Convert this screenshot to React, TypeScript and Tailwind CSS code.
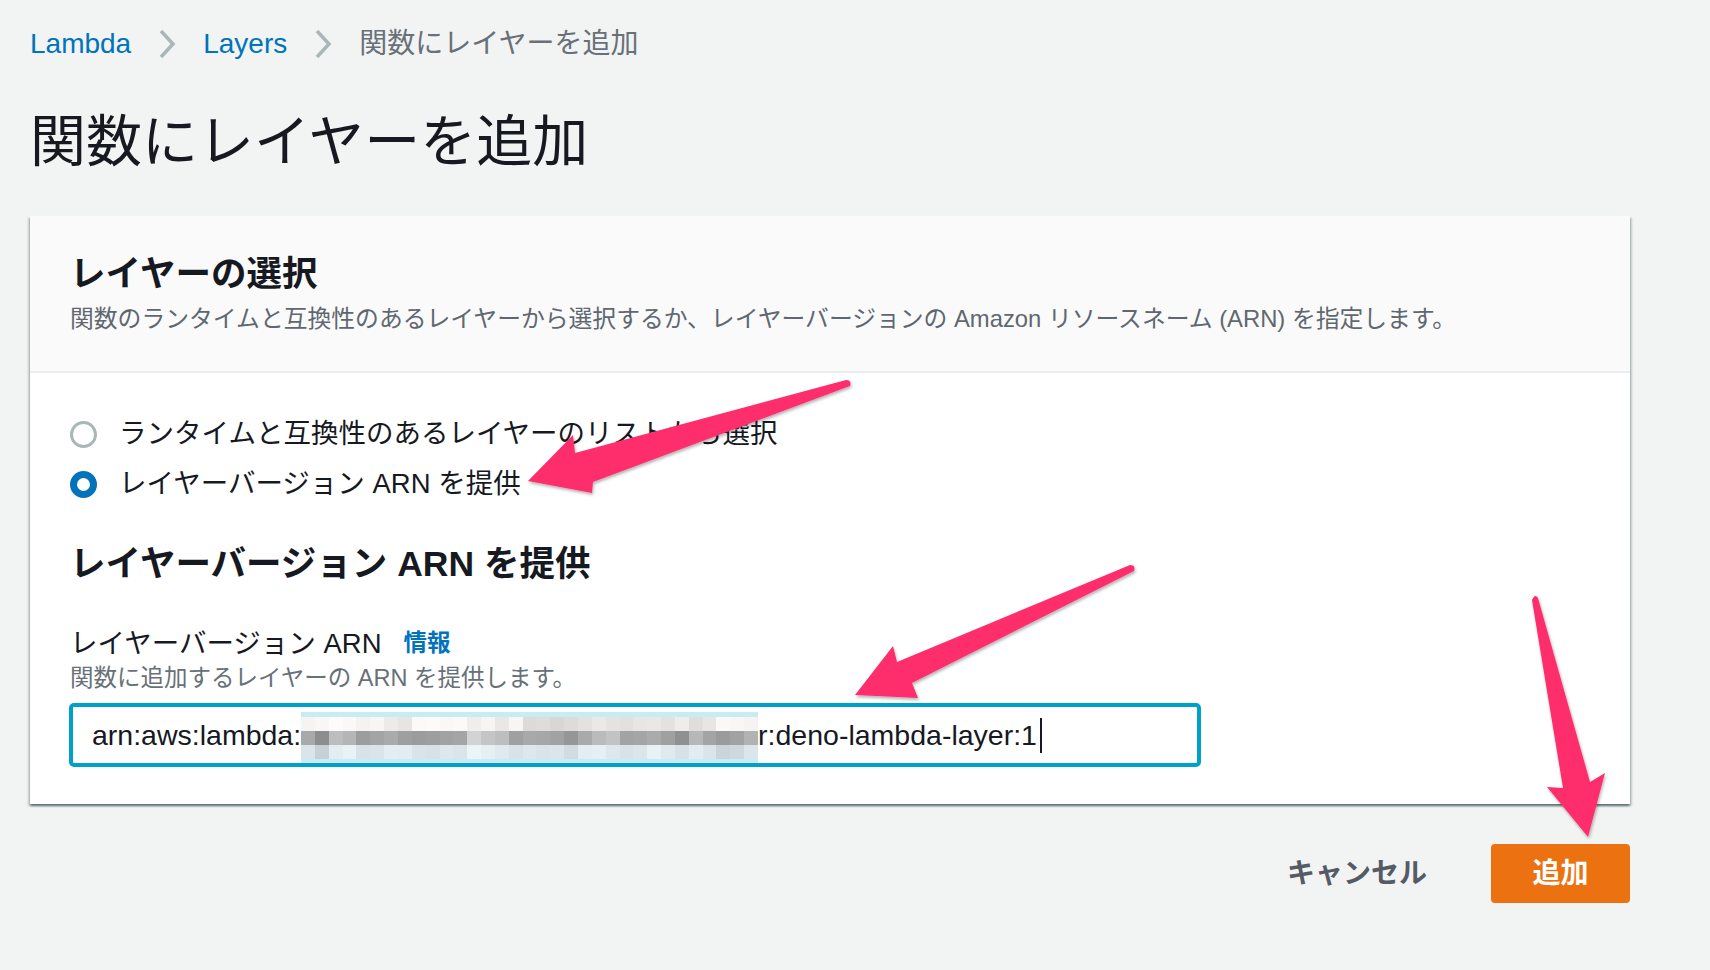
import React from "react";

const row1 = ["#f6f3f3","#fbf6f6","#fdfbfb","#fbf8f8","#f7f2f2","#f9f5f5","#efeaea","#e8e4e4","#fcf9f9","#fdfafa","#fbf7f7","#fcf9f9","#f0eded","#f7f4f4","#ebe7e7","#f8f5f5","#dedada","#e0dcdc","#dad6d6","#dfdbdb","#e5e1e1","#ece8e8","#e6e2e2","#e4e0e0","#e9e5e5","#ebe7e7","#e5e1e1","#f0ecec","#e1dddd","#e9e5e5","#fbf8f8","#f9f6f6","#f6f3f3"];
const row2 = ["#a7a9aa","#8b8d8e","#bcbdbe","#b4b5b6","#9c9d9e","#a3a4a5","#a9aaab","#9e9fa0","#9b9c9d","#9d9e9f","#a1a2a3","#a4a5a6","#d2d3d4","#c4c5c6","#bdbebf","#9fa0a1","#a8a9aa","#a6a7a8","#a1a2a3","#959697","#a9aaab","#babbbc","#c2c3c4","#a2a3a4","#a4a5a6","#aaabac","#9fa0a1","#8f9091","#b6b7b8","#a3a4a5","#9a9b9c","#a1a2a3","#b1b2b3"];
const row3 = ["#d9e5ea","#c5d1d6","#e2eef2","#e8f3f6","#d7e3e8","#d9e5ea","#e3eef2","#e2edf1","#d8e4e8","#d6e2e6","#dce8ec","#d9e5e9","#eaf5f8","#e5f0f3","#dfeaee","#d8e3e7","#dde8ec","#d9e4e8","#dbe6ea","#d0dce0","#e3eef2","#e5f0f4","#dde8ec","#d7e3e7","#dbe6ea","#e8f2f5","#dfeaee","#d6e2e6","#e2edf1","#dae5e9","#c9d5da","#cdd9de","#dbe6ea"];

// pixelated redaction over the account id
const Mosaic = () => (
    <div className="w-[457px] h-[51px] self-end flex flex-col shrink-0">
        <div className="h-[5px] bg-[#c8ebf4]"></div>
        {[row1, row2, row3].map((row, i) => (
            <div key={i} className="flex h-[14px]">
                {row.map((c, j) => <div key={j} className="flex-1" style={{ backgroundColor: c }}></div>)}
            </div>
        ))}
        <div className="h-[4px] bg-[#c8ebf4]"></div>
    </div>
);

const Chevron = () => (
    <svg width="18" height="30" viewBox="0 0 18 30" fill="none">
        <polyline points="3,2 15,15 3,28" stroke="#aab7b8" strokeWidth="3.5" />
    </svg>
);

const Radio = ({ checked, label }: { checked?: boolean; label: string }) => (
    <div className="flex items-center h-[40px]">
        {checked
            ? <span className="w-[27px] h-[27px] rounded-full border-[7px] border-[#0073bb] bg-white shrink-0"></span>
            : <span className="w-[27px] h-[27px] rounded-full border-[3px] border-[#aab7b8] bg-white shrink-0"></span>}
        <span className="ml-[22px] text-[27.5px] text-[#16191f]">{label}</span>
    </div>
);

const Arrows = () => (
    <svg className="absolute left-0 top-0 pointer-events-none" width="1710" height="970" viewBox="0 0 1710 970">
        <defs>
            <filter id="sh" x="-20%" y="-20%" width="140%" height="140%">
                <feDropShadow dx="1" dy="2" stdDeviation="1.5" floodColor="#000" floodOpacity="0.3" />
            </filter>
        </defs>
        <g fill="#fe2f6d" filter="url(#sh)">
            <path d="M528 481 L573 435 L575 453 L846 380 Q852 380 850 386 L593 482 L592 493 Z" />
            <path d="M855 695 L893 646 L897 662 L1130 565 Q1136 565 1134 571 L912 683 L918 698 Z" />
            <path d="M1588 837 L1547 787 L1563 788 L1532 600 Q1535 593 1538 598 L1590 782 L1605 773 Z" />
        </g>
    </svg>
);

const App = () => {
    return (
        <div className="relative min-h-screen w-full bg-[#f2f3f3] font-['Liberation_Sans','Noto_Sans_CJK_JP',sans-serif]">
            <div className="pl-[30px] pr-[80px] pt-[24px] pb-[60px]">
                <div className="flex items-center h-[40px] gap-[27px] text-[28px]">
                    <span className="text-[#0073bb]">Lambda</span>
                    <Chevron />
                    <span className="text-[#0073bb]">Layers</span>
                    <Chevron />
                    <span className="text-[#687078]">関数にレイヤーを追加</span>
                </div>

                <h1 className="mt-[43px] h-[70px] flex items-center text-[56px] text-[#16191f]">関数にレイヤーを追加</h1>

                <div className="mt-[39px] w-[1600px] bg-white shadow-[0_2px_2px_0_rgba(0,28,36,0.45),2px_2px_2px_0_rgba(0,28,36,0.15),-2px_2px_2px_0_rgba(0,28,36,0.15)]">
                    <div className="bg-[#fafafa] border-b-[2px] border-[#eaeded] px-[40px] pt-[37px] pb-[35px]">
                        <h2 className="h-[44px] flex items-center text-[35.5px] font-bold text-[#16191f]">レイヤーの選択</h2>
                        <p className="mt-[5px] h-[34px] flex items-center text-[23.8px] text-[#5f6770]">
                            関数のランタイムと互換性のあるレイヤーから選択するか、レイヤーバージョンの Amazon リソースネーム (ARN) を指定します。
                        </p>
                    </div>

                    <div className="px-[40px] pt-[41px] pb-[37px]">
                        <div className="flex flex-col gap-[10px]">
                            <Radio label="ランタイムと互換性のあるレイヤーのリストから選択" />
                            <Radio checked label="レイヤーバージョン ARN を提供" />
                        </div>

                        <h2 className="mt-[39px] h-[44px] flex items-center text-[35.5px] font-bold text-[#16191f]">レイヤーバージョン ARN を提供</h2>

                        <div className="mt-[38px] h-[38px] flex items-center text-[27.5px] text-[#16191f]">
                            <span>レイヤーバージョン ARN</span>
                            <span className="ml-[22px] text-[23.5px] font-bold text-[#0073bb]">情報</span>
                        </div>
                        <p className="h-[32px] flex items-center text-[23.5px] text-[#687078]">関数に追加するレイヤーの ARN を提供します。</p>

                        <div className="mt-[8px] -ml-[1px] w-[1132px] h-[64px] border-[4px] border-[#00a1c9] rounded-[5px] bg-white flex items-center pl-[19px] text-[28.5px] text-[#16191f] overflow-hidden">
                            <span className="whitespace-nowrap">arn:aws:lambda:</span>
                            <Mosaic />
                            <span className="whitespace-nowrap">r:deno-lambda-layer:1</span>
                            <span className="ml-[3px] w-[2px] h-[35px] bg-[#16191f]"></span>
                        </div>
                    </div>
                </div>

                <div className="mt-[40px] w-[1600px] flex justify-end items-center gap-[64px]">
                    <span className="text-[28px] font-bold text-[#545b64]">キャンセル</span>
                    <div className="w-[139px] h-[59px] rounded-[4px] bg-[#ec7211] flex items-center justify-center text-[28px] font-bold text-white">追加</div>
                </div>
            </div>
            <Arrows />
        </div>
    );
};

export default App;
